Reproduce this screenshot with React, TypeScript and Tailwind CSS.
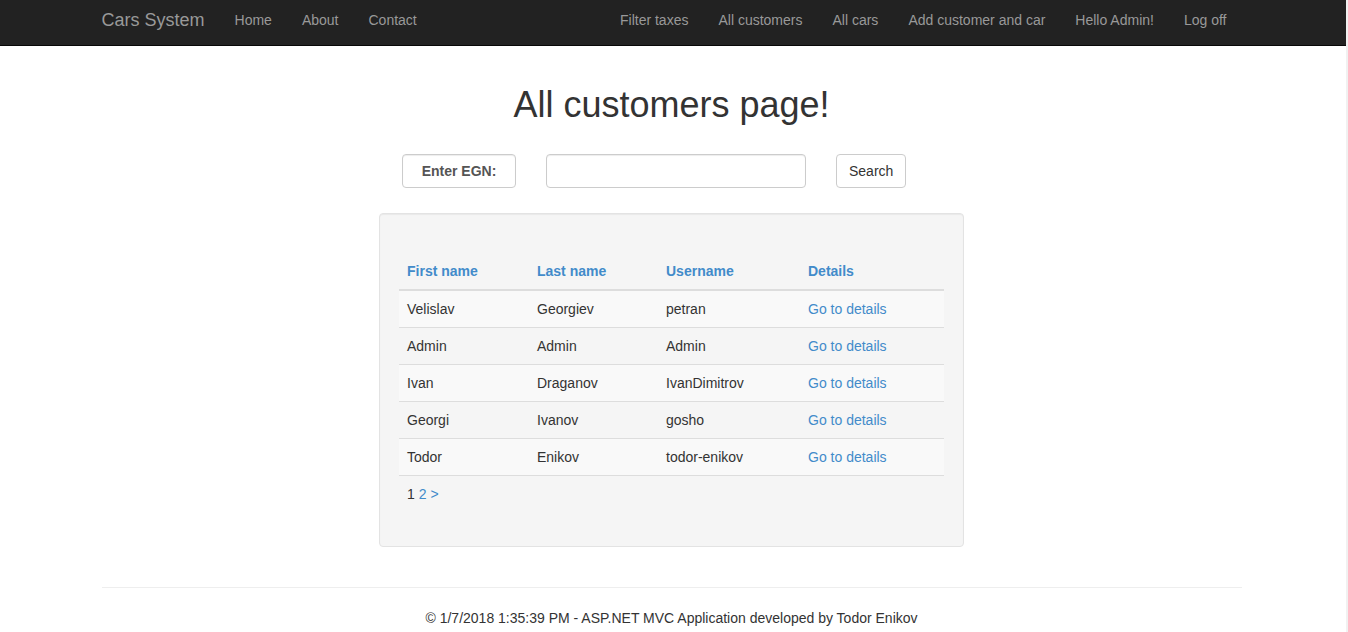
import React from "react";

const leftLinks = ["Home", "About", "Contact"];
const rightLinks = ["Filter taxes", "All customers", "All cars", "Add customer and car", "Hello Admin!", "Log off"];
const columns = ["First name", "Last name", "Username", "Details"];
const customers = [
  ["Velislav", "Georgiev", "petran"],
  ["Admin", "Admin", "Admin"],
  ["Ivan", "Draganov", "IvanDimitrov"],
  ["Georgi", "Ivanov", "gosho"],
  ["Todor", "Enikov", "todor-enikov"],
];

function NavItem({ label }: { label: string }) {
  return (
    <li>
      <a href="#" className="block px-[15px] pt-[10px] pb-[15px] text-[#999] hover:text-white">
        {label}
      </a>
    </li>
  );
}

export default function App() {
  return (
    <div className="min-h-screen border-r-2 border-[#f1f1f1] bg-white font-['Liberation_Sans',Arial,sans-serif] text-[14px] leading-[20px] text-[#333]">
      <header className="border-b border-[#080808] bg-[#222] pr-[3px]">
        <nav className="mx-auto flex max-w-[1140px] justify-between">
          <div className="flex">
            <a href="#" className="pt-[10px] pr-[15px] pb-[15px] text-[18px] text-[#999]">
              Cars System
            </a>
            <ul className="flex">
              {leftLinks.map((l) => (
                <NavItem key={l} label={l} />
              ))}
            </ul>
          </div>
          <ul className="flex">
            {rightLinks.map((l) => (
              <NavItem key={l} label={l} />
            ))}
          </ul>
        </nav>
      </header>

      <div className="pr-[3px]">
        <main className="mx-auto max-w-[1140px]">
          <h1 className="pt-[39px] text-center text-[36px] leading-[40px] font-normal">All customers page!</h1>

          <div className="mx-auto mt-[29px] max-w-[585px]">
            <form className="flex gap-[30px] pl-[23px]" onSubmit={(e) => e.preventDefault()}>
              <label
                htmlFor="egn"
                className="flex h-[34px] w-[114px] items-center justify-center rounded-[4px] border border-[#ccc] font-bold text-[#555] shadow-[inset_0_1px_1px_rgba(0,0,0,0.075)]"
              >
                Enter EGN:
              </label>
              <input
                id="egn"
                type="text"
                className="h-[34px] w-[260px] rounded-[4px] border border-[#ccc] bg-white px-3 text-[#555] shadow-[inset_0_1px_1px_rgba(0,0,0,0.075)]"
              />
              <button type="submit" className="h-[34px] rounded-[4px] border border-[#ccc] bg-white px-3">
                Search
              </button>
            </form>

            <section className="mt-[25px] rounded-[4px] border border-[#e3e3e3] bg-[#f5f5f5] px-[19px] pt-[39px] pb-[34px] shadow-[inset_0_1px_1px_rgba(0,0,0,0.05)]">
              <table className="w-full table-fixed border-collapse text-left">
                <colgroup>
                  <col className="w-[130px]" />
                  <col className="w-[129px]" />
                  <col className="w-[142px]" />
                  <col />
                </colgroup>
                <thead>
                  <tr className="border-b-2 border-[#ddd]">
                    {columns.map((c) => (
                      <th key={c} className="p-2 font-bold text-[#428bca]">
                        {c === "Details" ? c : <a href="#">{c}</a>}
                      </th>
                    ))}
                  </tr>
                </thead>
                <tbody>
                  {customers.map((row) => (
                    <tr key={row[0]} className="border-b border-[#ddd] odd:bg-[#f9f9f9]">
                      {row.map((value, i) => (
                        <td key={i} className="p-2">
                          {value}
                        </td>
                      ))}
                      <td className="p-2">
                        <a href="#" className="text-[#428bca] hover:underline">
                          Go to details
                        </a>
                      </td>
                    </tr>
                  ))}
                </tbody>
                <tfoot>
                  <tr>
                    <td colSpan={4} className="p-2">
                      1{" "}
                      <a href="#" className="text-[#428bca]">
                        2
                      </a>{" "}
                      <a href="#" className="text-[#428bca]">
                        &gt;
                      </a>
                    </td>
                  </tr>
                </tfoot>
              </table>
            </section>
          </div>

          <footer className="mt-[40px] border-t border-[#eee] pt-[20px] text-center">
            © 1/7/2018 1:35:39 PM - ASP.NET MVC Application developed by Todor Enikov
          </footer>
        </main>
      </div>
    </div>
  );
}
